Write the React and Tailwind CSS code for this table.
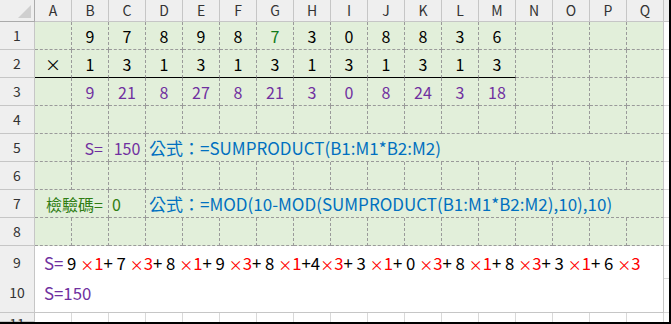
const COLS = ['A', 'B', 'C', 'D', 'E', 'F', 'G', 'H', 'I', 'J', 'K', 'L', 'M', 'N', 'O', 'P', 'Q'];
const ROW1 = ['', '9', '7', '8', '9', '8', '7', '3', '0', '8', '8', '3', '6'];
const ROW2 = ['×', '1', '3', '1', '3', '1', '3', '1', '3', '1', '3', '1', '3'];
const ROW3 = ['', '9', '21', '8', '27', '8', '21', '3', '0', '8', '24', '3', '18'];
const TERMS = [
  ['9 ', '1'], ['7 ', '3'], ['8 ', '1'], ['9 ', '3'], ['8 ', '1'], ['4', '3'],
  ['3 ', '1'], ['0 ', '3'], ['8 ', '1'], ['8 ', '3'], ['3 ', '1'], ['6 ', '3'],
];

const font = { fontFamily: '"Noto Sans CJK TC", "Noto Sans", sans-serif' };

const RowHead = ({ n, className = '' }) => (
  <div className={`flex items-center justify-center bg-[#efefef] border-r border-b border-[#c6c6c6] text-[14px] text-[#333] ${className}`}>
    {n}
  </div>
);

// one green cell with dotted grid lines
const Cell = ({ children, className = '', last }) => (
  <div
    className={`flex items-center whitespace-nowrap bg-[#e2efda] border-b border-r border-dashed border-[#9a9a9a] text-[16px] ${
      last ? '[border-right-style:solid] border-r-[#c6c6c6]' : ''
    } ${className}`}
  >
    {children}
  </div>
);

const Strip = () => <div className="bg-white border-b border-[#d9d9d9]" />;

export default function App() {
  return (
    <div className="w-[671px] h-[324px] overflow-hidden bg-white border-r-2 border-b-2 border-black" style={font}>
      <div className="grid grid-cols-[35px_repeat(17,37px)_6px] grid-rows-[22px_repeat(8,28px)_33px_34px_9px]">
        {/* header */}
        <div className="relative bg-[#efefef] border-r border-b border-[#ababab]">
          <div className="absolute right-[3px] bottom-[3px] w-0 h-0 border-l-[13px] border-l-transparent border-b-[13px] border-b-[#cfcfcf]" />
        </div>
        {COLS.map((c) => (
          <div key={c} className="flex items-center justify-center bg-[#efefef] border-r border-b border-[#c6c6c6] text-[14px] text-[#333]">
            {c}
          </div>
        ))}
        <div className="bg-[#efefef] border-b border-[#c6c6c6]" />

        {/* rows 1-3 */}
        {[ROW1, ROW2, ROW3].map((row, r) => (
          <div key={r} className="contents">
            <RowHead n={r + 1} />
            {COLS.map((c, i) => (
              <Cell
                key={c}
                last={i === 16}
                className={`justify-center ${r === 1 && i < 13 ? '[border-bottom-style:solid] border-b-black' : ''} ${
                  r === 2 ? 'text-[#7030a0]' : r === 0 && i === 6 ? 'text-[#117a1a]' : 'text-black'
                } ${row[i] === '×' ? 'text-[13px]' : ''}`}
              >
                {row[i] || ''}
              </Cell>
            ))}
            <Strip />
          </div>
        ))}

        {/* row 4 */}
        <RowHead n={4} />
        {COLS.map((c, i) => <Cell key={c} last={i === 16} />)}
        <Strip />

        {/* row 5 */}
        <RowHead n={5} />
        <Cell />
        <Cell className="justify-end pr-[5px] text-[#7030a0]">S=</Cell>
        <Cell className="justify-center text-[#7030a0]">150</Cell>
        <Cell last className="col-span-14 pl-[3px] text-[17px] text-[#0070c0]">公式：=SUMPRODUCT(B1:M1*B2:M2)</Cell>
        <Strip />

        {/* row 6 */}
        <RowHead n={6} />
        {COLS.map((c, i) => <Cell key={c} last={i === 16} />)}
        <Strip />

        {/* row 7 */}
        <RowHead n={7} />
        <Cell className="col-span-2 justify-end pr-[5px] text-[#2f7d12]">檢驗碼=</Cell>
        <Cell className="pl-[3px] text-[#2f7d12]">0</Cell>
        <Cell last className="col-span-14 pl-[3px] text-[17px] text-[#0070c0]">公式：=MOD(10-MOD(SUMPRODUCT(B1:M1*B2:M2),10),10)</Cell>
        <Strip />

        {/* row 8 */}
        <RowHead n={8} />
        {COLS.map((c, i) => <Cell key={c} last={i === 16} />)}
        <Strip />

        {/* rows 9-10: text box */}
        <RowHead n={9} className="border-b-0" />
        <div className="col-span-17 row-span-2 flex flex-col gap-[5px] bg-white border-r border-b border-[#c6c6c6] pl-[9px] pt-[5px] text-[16.8px] whitespace-nowrap">
          <div className="flex items-baseline leading-[24px]">
            <span className="text-[#7030a0]">S=&nbsp;</span>
            {TERMS.map(([d, m], i) => (
              <span key={i} className="whitespace-pre">
                {i > 0 && <span className="text-black">+{d === '4' ? '' : ' '}</span>}
                <span className="text-black">{d}</span>
                <span className="text-[#ff0000] text-[14px]">×</span>
                <span className="text-[#ff0000]">{m}</span>
              </span>
            ))}
          </div>
          <div className="leading-[24px] text-[#7030a0]">S=150</div>
        </div>
        <div className="bg-white border-b border-[#d9d9d9]" />
        <RowHead n={10} className="pb-[6px]" />
        <div className="bg-white border-b border-[#d9d9d9]" />

        {/* row 11 */}
        <RowHead n={11} className="items-start" />
        {COLS.map((c) => (
          <div key={c} className="bg-white border-r border-[#d9d9d9]" />
        ))}
        <div className="bg-white" />
      </div>
    </div>
  );
}
